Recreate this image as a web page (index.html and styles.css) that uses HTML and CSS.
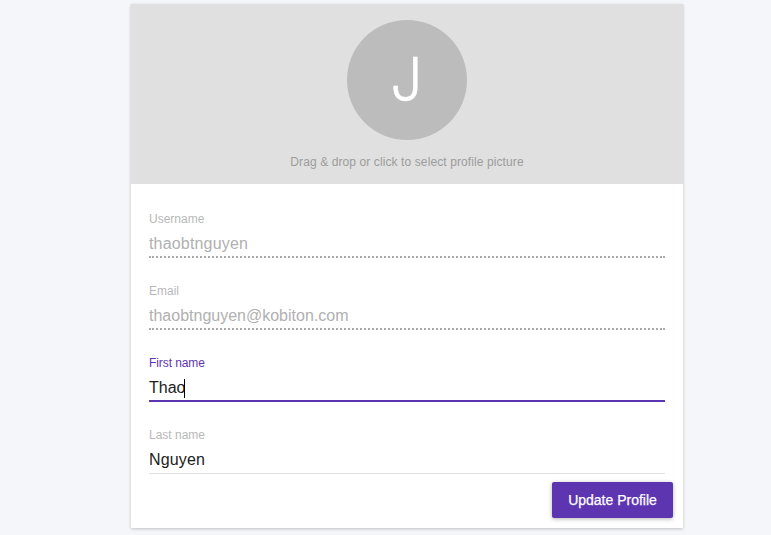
FILE: index.html
```html
<!DOCTYPE html>
<html lang="en">
<head>
<meta charset="utf-8">
<title>Profile</title>
<link rel="stylesheet" href="styles.css">
</head>
<body>
<form class="card">
  <div class="picture">
    <div class="avatar"><span class="initial">J</span></div>
    <p class="hint">Drag &amp; drop or click to select profile picture</p>
  </div>
  <div class="fields">
    <div class="field disabled"><div class="label">Username</div><div class="value username">thaobtnguyen</div></div>
    <div class="field disabled"><div class="label">Email</div><div class="value">thaobtnguyen@kobiton.com</div></div>
    <div class="field focused"><div class="label">First name</div><div class="value">Thao<i class="caret"></i></div></div>
    <div class="field"><div class="label">Last name</div><div class="value last">Nguyen</div></div>
  </div>
  <div class="actions"><button type="button">Update Profile</button></div>
</form>
</body>
</html>
```

FILE: styles.css
```css
* { box-sizing: border-box; }
body {
  margin: 0;
  padding: 4px 0 0 131px;
  height: 535px;
  overflow: hidden;
  background: #f4f6fa;
  font-family: "Liberation Sans", sans-serif;
}
.card {
  width: 552px;
  height: 524px;
  background: #fff;
  box-shadow: 0 1px 3px rgba(0, 0, 0, .22);
}
.picture {
  height: 180px;
  padding-top: 16px;
  background: #e0e0e0;
}
.avatar {
  width: 120px;
  height: 120px;
  margin: 0 auto;
  border-radius: 50%;
  background: #bcbcbc;
  color: #fff;
  font: 300 61px/118px Inter, sans-serif;
  text-align: center;
}
.initial {
  display: inline-block;
  transform: translateX(-1px) scaleX(.92);
  -webkit-text-stroke: .5px #fff;
}
.hint {
  margin: 14px 0 0;
  color: #9c9c9c;
  font-size: 12px;
  line-height: 16px;
  letter-spacing: .1px;
  text-align: center;
}
.fields { padding: 0 18px; }
.field { height: 72px; padding-top: 27px; }
.label { color: #b8b8b8; font-size: 12px; line-height: 16px; }
.value {
  display: flex;
  align-items: center;
  height: 31px;
  padding-top: 3px;
  border-bottom: 1px solid #e0e0e0;
  color: #212121;
  font-size: 16px;
  line-height: 20px;
}
.disabled .value {
  padding-top: 5px;
  border-bottom: 2px dotted #aaa;
  color: #b0b0b0;
}
.username { letter-spacing: .17px; }
.last { letter-spacing: .15px; }
.focused .label { color: #5e35b1; letter-spacing: -.08px; }
.focused .value { padding-top: 5px; border-bottom: 2px solid #5e35b1; }
.caret { width: 1px; height: 19px; margin-left: -1px; background: #000; }
.actions { display: flex; justify-content: flex-end; padding: 10px 10px 0; }
button {
  width: 121px;
  height: 36px;
  padding: 0;
  border: 0;
  border-radius: 2px;
  background: #5e35b1;
  box-shadow: 0 1px 4px rgba(0, 0, 0, .3);
  color: #fff;
  font: 14px "Liberation Sans", sans-serif;
  -webkit-text-stroke: .25px #fff;
}
```
